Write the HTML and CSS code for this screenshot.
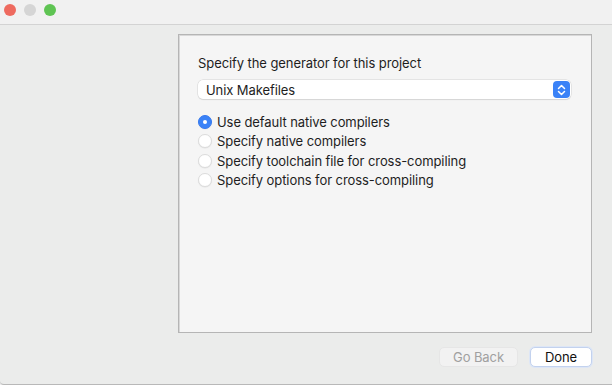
FILE: index.html
```html
<!DOCTYPE html>
<html>
<head>
<meta charset="utf-8">
<link rel="stylesheet" href="styles.css">
</head>
<body>
<div class="window">
  <div class="titlebar">
    <span class="light red"></span>
    <span class="light gray"></span>
    <span class="light green"></span>
  </div>
  <div class="content">
    <div class="panel">
      <div class="heading">Specify the generator for this project</div>
      <div class="select">
        <span class="select-text">Unix Makefiles</span>
        <span class="stepper">
          <svg width="9" height="12" viewBox="0 0 9 12"><path d="M1.5 4.5 L4.5 1.5 L7.5 4.5 M1.5 7.5 L4.5 10.5 L7.5 7.5" fill="none" stroke="#fff" stroke-width="1.5" stroke-linecap="round" stroke-linejoin="round"/></svg>
        </span>
      </div>
      <div class="radios">
        <div class="radio-row"><span class="radio checked"></span><span>Use default native compilers</span></div>
        <div class="radio-row"><span class="radio"></span><span>Specify native compilers</span></div>
        <div class="radio-row"><span class="radio"></span><span>Specify toolchain file for cross-compiling</span></div>
        <div class="radio-row"><span class="radio"></span><span>Specify options for cross-compiling</span></div>
      </div>
    </div>
    <div class="buttons">
      <button class="btn disabled">Go Back</button>
      <button class="btn primary">Done</button>
    </div>
  </div>
</div>
</body>
</html>
```
FILE: styles.css
```css
html, body {
  margin: 0;
  padding: 0;
  background: #ececec;
}
body {
  font-family: Inter, "Liberation Sans", Arial, sans-serif;
  font-size: 13px;
  letter-spacing: -0.08px;
  color: #1e1e1e;
}
.window {
  width: 612px;
  height: 385px;
  box-sizing: border-box;
  background: #ebeceb;
  border-bottom: 1px solid #b8b8b8;
  border-bottom-left-radius: 4px;
  overflow: hidden;
  display: flex;
  flex-direction: column;
}
.titlebar {
  background: #f1f1f1;
  border-bottom: 1px solid #d3d3d3;
  display: flex;
  align-items: center;
  gap: 8px;
  padding-left: 4px;
  padding-bottom: 4px;
  box-sizing: content-box;
  height: 20px;
}
.light {
  width: 12px;
  height: 12px;
  border-radius: 50%;
  display: block;
}
.red { background: #ee6a5f; }
.gray { background: #d5d5d5; }
.green { background: #5fc453; }
.content {
  padding: 9px 20px 0 178px;
  display: flex;
  flex-direction: column;
}
.panel {
  height: 299px;
  box-sizing: border-box;
  background: #f5f5f5;
  border: 1px solid #b5b5b5;
  box-shadow: inset 1px 1px 0 #d8d8d8;
  padding: 20px 20px 0 19px;
}
.heading {
  line-height: 16px;
  height: 16px;
}
.select {
  margin-top: 9px;
  height: 19px;
  background: #fff;
  border-radius: 5px;
  box-shadow: 0 0 0 0.5px #d4d4d4, 0 1px 1px rgba(0,0,0,0.12);
  display: flex;
  align-items: center;
  justify-content: space-between;
  padding-left: 8px;
  padding-right: 1px;
}
.select-text {
  line-height: 16px;
}
.stepper {
  width: 17px;
  height: 17px;
  border-radius: 4px;
  background: #3a82f7;
  display: flex;
  align-items: center;
  justify-content: center;
}
.radios {
  margin-top: 15px;
  display: flex;
  flex-direction: column;
  gap: 3.3px;
}
.radio-row {
  display: flex;
  align-items: center;
  gap: 5px;
  height: 16px;
  line-height: 16px;
}
.radio {
  width: 14px;
  height: 14px;
  box-sizing: border-box;
  border-radius: 50%;
  background: #fff;
  border: 1px solid #dcdcdc;
  box-shadow: 0 0.5px 1px rgba(0,0,0,0.08);
  display: block;
  position: relative;
}
.radio.checked {
  background: #3a82f7;
  border-color: #3478f0;
}
.radio.checked::after {
  content: "";
  position: absolute;
  left: 4px;
  top: 4px;
  width: 4px;
  height: 4px;
  border-radius: 50%;
  background: #fff;
}
.buttons {
  margin-top: 14px;
  display: flex;
  justify-content: flex-end;
  gap: 12px;
}
.btn {
  font-family: Inter, "Liberation Sans", Arial, sans-serif;
  font-size: 13px;
  letter-spacing: -0.08px;
  height: 20px;
  border-radius: 5px;
  padding: 0;
  line-height: 18px;
}
.btn.disabled {
  width: 79px;
  background: #f2f2f2;
  color: #a0a0a0;
  border: 1px solid #e6e6e6;
}
.btn.primary {
  width: 62px;
  background: #fff;
  color: #111;
  border: 1px solid #c3d2ee;
  box-shadow: 0 0 0 1px #dde6f6;
}
```
